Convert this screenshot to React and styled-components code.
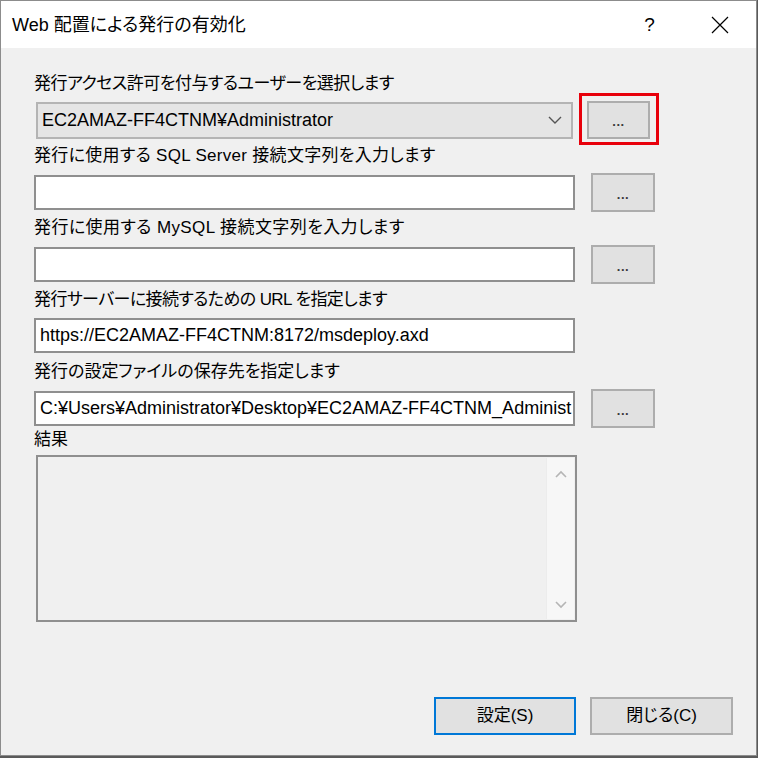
import styled, { createGlobalStyle } from "styled-components"

const Global = createGlobalStyle`
	html, body {
		margin: 0;
		padding: 0;
		background: #5a5a5a;
	}
	* {
		box-sizing: border-box;
	}
`

// Latin from Liberation Sans, kana/kanji from Noto CJK with proportional kana
const font = `"Liberation Sans", "Noto Sans CJK JP", sans-serif`

const Window = styled.div`
	width: 757px;
	height: 756px;
	border: 1px solid #8c8c8c;
	background: #f0f0f0;
	display: flex;
	flex-direction: column;
	font-family: ${font};
	font-feature-settings: "palt";
	color: #000;
`

const TitleBar = styled.div`
	height: 47px;
	background: #fff;
	display: flex;
	align-items: center;
	padding: 0 2px 0 11px;
`

const Title = styled.div`
	font-size: 18px;
	line-height: 20px;
	flex: 1;
`

const TitleButton = styled.div`
	width: 69px;
	height: 100%;
	display: flex;
	align-items: center;
	justify-content: center;
	font-size: 19px;
	padding-right: ${(p) => p.$pad || 0}px;
`

const Body = styled.div`
	flex: 1;
	display: flex;
	flex-direction: column;
	padding: 24px 23px 20px 33px;
`

const Fields = styled.div`
	display: flex;
	flex-direction: column;
	gap: 7px;
`

const Field = styled.div`
	display: flex;
	flex-direction: column;
	gap: ${(p) => (p.$tight ? 7 : 9)}px;
	margin-top: ${(p) => (p.$tight ? -4 : 0)}px;
`

const Label = styled.div`
	font-size: 17px;
	line-height: 24px;
	height: 20px;
	white-space: nowrap;
	letter-spacing: ${(p) => p.$ls || 0}px;
`

const Row = styled.div`
	display: grid;
	grid-template-columns: 541px 64px;
	column-gap: 16px;
	align-items: center;
	height: 36px;
`

const TextBox = styled.div`
	height: 35px;
	background: #fff;
	border: 2px solid #8f8f8f;
	padding: 0 4px;
	font-size: 18px;
	line-height: 31px;
	white-space: nowrap;
	overflow: hidden;
`

const Combo = styled.div`
	height: 37px;
	margin: 0 2px;
	background: #e5e5e5;
	border: 2px solid #b4b4b4;
	padding: 0 9px 0 4px;
	display: flex;
	align-items: center;
	justify-content: space-between;
	font-size: 18px;
	white-space: nowrap;
`

const BrowseWrap = styled.div`
	position: relative;
	margin-left: ${(p) => p.$shift || 0}px;
	width: ${(p) => p.$w || 64}px;
	${(p) =>
		p.$highlight &&
		`
		&::after {
			content: "";
			position: absolute;
			left: -8px;
			right: -9px;
			top: -8px;
			bottom: -6px;
			border: 3px solid #e8000b;
		}
	`}
`

const Button = styled.div`
	height: ${(p) => p.$h || 39}px;
	width: ${(p) => p.$w || 64}px;
	background: #e1e1e1;
	border: 2px solid ${(p) => (p.$primary ? "#0078d7" : "#adadad")};
	display: flex;
	align-items: center;
	justify-content: center;
	font-size: 17px;
	line-height: 20px;
`

const Dots = styled.span`
	font-size: 13px;
	font-weight: 700;
	letter-spacing: 0.5px;
	transform: translateY(2px);
	color: #3a3a3a;
`

const ResultBox = styled.div`
	width: 541px;
	height: 167px;
	margin-left: 2px;
	border: 2px solid #8f8f8f;
	background: #f0f0f0;
	display: flex;
	justify-content: flex-end;
	padding: 1px;
`

const ScrollTrack = styled.div`
	width: 28px;
	background: #f7f7f7;
	border-left: 1px solid #ececec;
	display: flex;
	flex-direction: column;
	justify-content: space-between;
	align-items: center;
	padding: 12px 0 10px;
`

const Footer = styled.div`
	margin-top: auto;
	display: flex;
	justify-content: flex-end;
	gap: 14px;
`

const Chevron = ({ up }) => (
	<svg width="12" height="8" viewBox="0 0 12 8">
		<path
			d={up ? "M1 7 L6 2 L11 7" : "M1 1 L6 6 L11 1"}
			fill="none"
			stroke="#b5b5b5"
			strokeWidth="1.6"
		/>
	</svg>
)

function Browse(props) {
	return (
		<BrowseWrap {...props}>
			<Button $w={props.$w} $h={props.$h}>
				<Dots>...</Dots>
			</Button>
		</BrowseWrap>
	)
}

export default function App() {
	return (
		<>
			<Global />
			<Window>
				<TitleBar>
					<Title>Web 配置による発行の有効化</Title>
					<TitleButton $pad={2}>?</TitleButton>
					<TitleButton>
						<svg width="18" height="18" viewBox="0 0 18 18">
							<path d="M1 1 L17 17 M17 1 L1 17" stroke="#000" strokeWidth="1.2" />
						</svg>
					</TitleButton>
				</TitleBar>
				<Body>
					<Fields>
						<Field>
							<Label $ls={-0.5}>発行アクセス許可を付与するユーザーを選択します</Label>
							<Row>
								<Combo>
									<span>EC2AMAZ-FF4CTNM¥Administrator</span>
									<svg width="14" height="8" viewBox="0 0 14 8">
										<path d="M1 1 L7 7 L13 1" fill="none" stroke="#555" strokeWidth="1.4" />
									</svg>
								</Combo>
								<Browse $highlight $shift={-4} $w={63} $h={38} />
							</Row>
						</Field>
						<Field>
							<Label $ls={0.3}>発行に使用する SQL Server 接続文字列を入力します</Label>
							<Row>
								<TextBox />
								<Browse />
							</Row>
						</Field>
						<Field>
							<Label $ls={0.4}>発行に使用する MySQL 接続文字列を入力します</Label>
							<Row>
								<TextBox />
								<Browse />
							</Row>
						</Field>
						<Field>
							<Label $ls={-0.6}>発行サーバーに接続するための URL を指定します</Label>
							<Row>
								<TextBox>https://EC2AMAZ-FF4CTNM:8172/msdeploy.axd</TextBox>
							</Row>
						</Field>
						<Field>
							<Label>発行の設定ファイルの保存先を指定します</Label>
							<Row>
								<TextBox>C:¥Users¥Administrator¥Desktop¥EC2AMAZ-FF4CTNM_Administ</TextBox>
								<Browse />
							</Row>
						</Field>
						<Field $tight>
							<Label>結果</Label>
							<ResultBox>
								<ScrollTrack>
									<Chevron up />
									<Chevron />
								</ScrollTrack>
							</ResultBox>
						</Field>
					</Fields>
					<Footer>
						<Button $primary $w={142} $h={38}>設定(S)</Button>
						<Button $w={143} $h={38}>閉じる(C)</Button>
					</Footer>
				</Body>
			</Window>
		</>
	)
}
